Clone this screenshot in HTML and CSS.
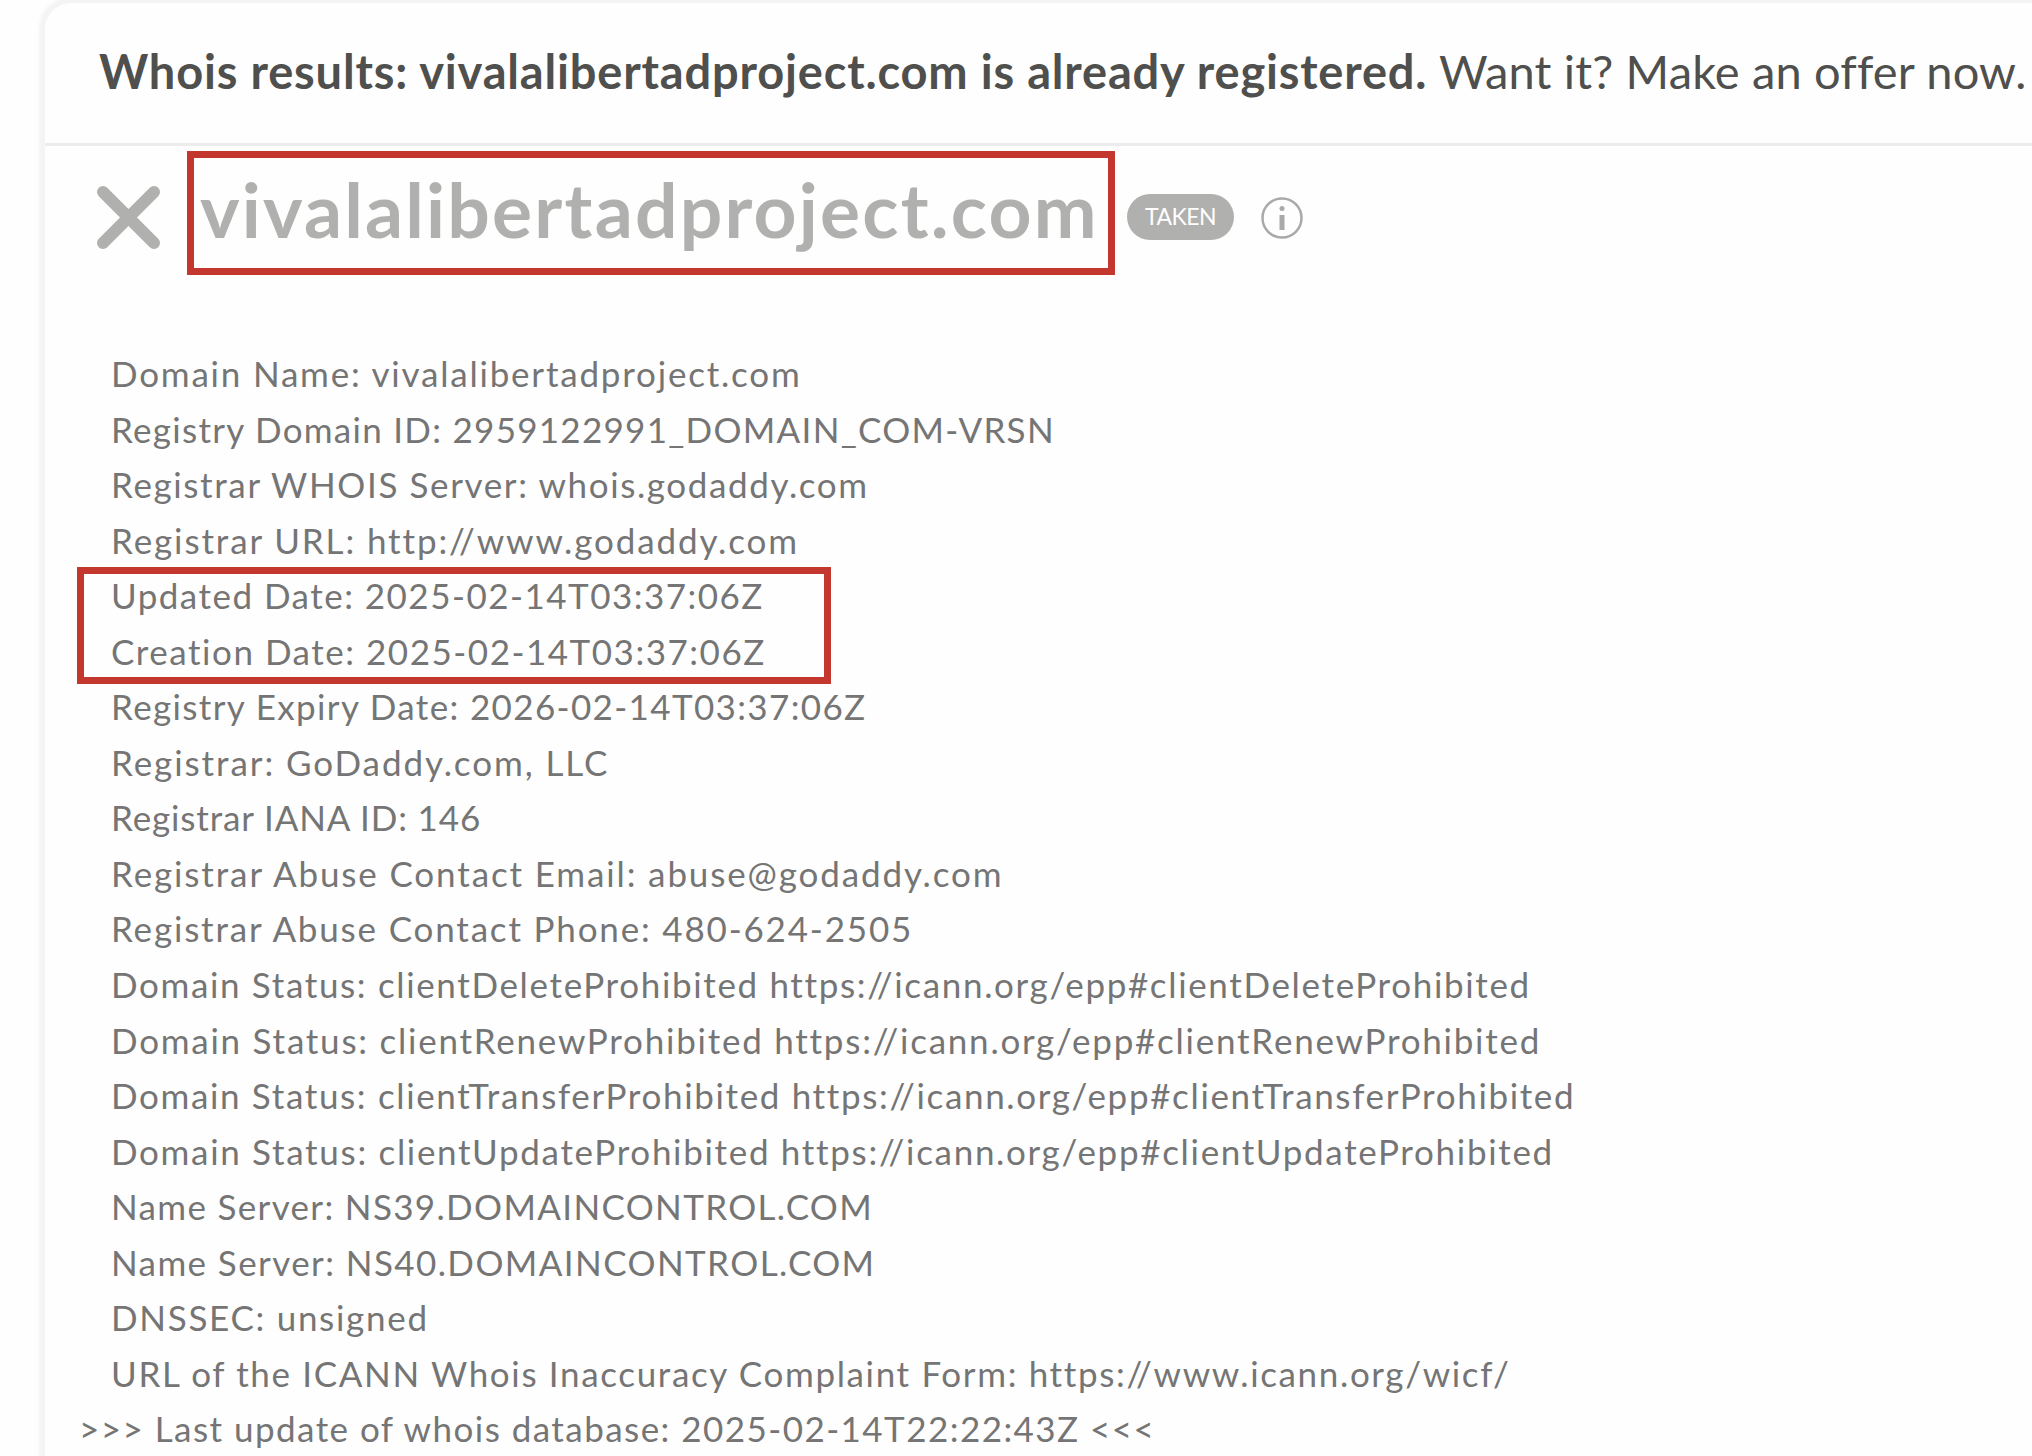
FILE: index.html
```
<!DOCTYPE html>
<html lang="en">
<head>
  <meta charset="UTF-8">
  <meta name="viewport" content="width=device-width, initial-scale=1.0">
  <title>Whois results: vivalalibertadproject.com</title>
  <link rel="stylesheet" href="styles.css">
</head>
<body>
  <main class="card">
    <header class="card-header">
      <p><strong>Whois results: vivalalibertadproject.com is already registered.</strong> Want it? Make an offer now.</p>
    </header>
    <section class="domain">
      <svg class="cross" viewBox="0 0 63 63">
        <path d="M6 6L57 57M57 6L6 57" />
      </svg>
      <h1 class="domain-name">vivalalibertadproject.com</h1>
      <span class="badge">TAKEN</span>
      <svg class="info" viewBox="0 0 42 42">
        <circle cx="21" cy="21" r="19.5" />
        <path d="M21 18V33" />
        <path class="dot" d="M21 11.5V11.6" />
      </svg>
    </section>
    <ul class="record">
      <li>Domain Name: vivalalibertadproject.com</li>
      <li>Registry Domain ID: 2959122991_DOMAIN_COM-VRSN</li>
      <li>Registrar WHOIS Server: whois.godaddy.com</li>
      <li>Registrar URL: http://www.godaddy.com</li>
      <li class="highlight">Updated Date: 2025-02-14T03:37:06Z</li>
      <li>Creation Date: 2025-02-14T03:37:06Z</li>
      <li>Registry Expiry Date: 2026-02-14T03:37:06Z</li>
      <li>Registrar: GoDaddy.com, LLC</li>
      <li>Registrar IANA ID: 146</li>
      <li>Registrar Abuse Contact Email: abuse@godaddy.com</li>
      <li>Registrar Abuse Contact Phone: 480-624-2505</li>
      <li>Domain Status: clientDeleteProhibited https://icann.org/epp#clientDeleteProhibited</li>
      <li>Domain Status: clientRenewProhibited https://icann.org/epp#clientRenewProhibited</li>
      <li>Domain Status: clientTransferProhibited https://icann.org/epp#clientTransferProhibited</li>
      <li>Domain Status: clientUpdateProhibited https://icann.org/epp#clientUpdateProhibited</li>
      <li>Name Server: NS39.DOMAINCONTROL.COM</li>
      <li>Name Server: NS40.DOMAINCONTROL.COM</li>
      <li>DNSSEC: unsigned</li>
      <li>URL of the ICANN Whois Inaccuracy Complaint Form: https://www.icann.org/wicf/</li>
      <li class="last-update">&gt;&gt;&gt; Last update of whois database: 2025-02-14T22:22:43Z &lt;&lt;&lt;</li>
    </ul>
  </main>
</body>
</html>
```
FILE: styles.css
```
*,
*::before {
  box-sizing: border-box;
}

html {
  background-color: #fefefe;
  font-family: Lato, sans-serif;
}

body {
  height: 1456px;
  margin: 0;
  overflow: hidden;
  padding: 3px 0 0 45px;
}

.card {
  background-color: #fefefe;
  border-top-left-radius: 26px;
  box-shadow: 0 0 3px 6px #f4f4f4;
  height: 1500px;
  width: 2020px;
}

.card-header {
  align-items: center;
  border-bottom: 3px solid #ececec;
  color: #4f4f4d;
  display: flex;
  font-size: 47px;
  height: 143px;
  letter-spacing: 0.15px;
  padding: 0 0 4px 54px;
  white-space: nowrap;
}

.card-header p {
  margin: 0;
}

.card-header strong {
  letter-spacing: 0.82px;
}

.domain {
  align-items: center;
  display: flex;
  height: 134px;
  padding: 0 0 0 52px;
}

.cross {
  fill: none;
  height: 63px;
  margin-top: 9px;
  stroke: #b0b0ae;
  stroke-linecap: round;
  stroke-width: 12;
  width: 63px;
}

.domain-name {
  border: 7px solid #c4372f;
  color: #b0b0ae;
  font-size: 75px;
  height: 124px;
  letter-spacing: 2.2px;
  line-height: 102px;
  margin: 0 12px 0 27px;
  padding-left: 6px;
  width: 928px;
}

.badge {
  background-color: #b0b0ae;
  border-radius: 23px;
  color: #fefefe;
  font-size: 23px;
  height: 46px;
  letter-spacing: -0.5px;
  line-height: 45px;
  margin-top: 8px;
  text-align: center;
  width: 107px;
}

.info {
  fill: none;
  height: 42px;
  margin: 9px 0 0 27px;
  stroke: #a9a9a8;
  stroke-width: 2.5;
  width: 42px;
}

.info path {
  stroke-width: 5;
}

.info .dot {
  stroke-linecap: round;
}

.record {
  color: #757575;
  font-size: 35px;
  letter-spacing: 1.65px;
  line-height: 55.55px;
  list-style: none;
  margin: 0;
  padding: 66px 0 0 66px;
  white-space: nowrap;
}

.record li:nth-child(1) { letter-spacing: 1.8px; }
.record li:nth-child(2) { letter-spacing: 1.28px; }
.record li:nth-child(3) { letter-spacing: 1.62px; }
.record li:nth-child(4) { letter-spacing: 1.88px; }
.record li:nth-child(5) { letter-spacing: 1.48px; }
.record li:nth-child(6) { letter-spacing: 1.52px; }
.record li:nth-child(7) { letter-spacing: 1.36px; }
.record li:nth-child(8) { letter-spacing: 1.92px; }
.record li:nth-child(9) { letter-spacing: 0.86px; }
.record li:nth-child(10) { letter-spacing: 1.87px; }
.record li:nth-child(11) { letter-spacing: 1.82px; }
.record li:nth-child(13) { letter-spacing: 1.76px; }
.record li:nth-child(15) { letter-spacing: 1.69px; }
.record li:nth-child(16) { letter-spacing: 1.34px; }
.record li:nth-child(17) { letter-spacing: 1.41px; }
.record li:nth-child(18) { letter-spacing: 1.7px; }

.highlight {
  position: relative;
}

/* Red frame over the updated and creation dates */
.highlight::before {
  border: 7px solid #c4372f;
  content: '';
  height: 117px;
  left: -34px;
  position: absolute;
  top: -1px;
  width: 754px;
}

.record .last-update {
  letter-spacing: 1.45px;
  margin-left: -32px;
}
```
